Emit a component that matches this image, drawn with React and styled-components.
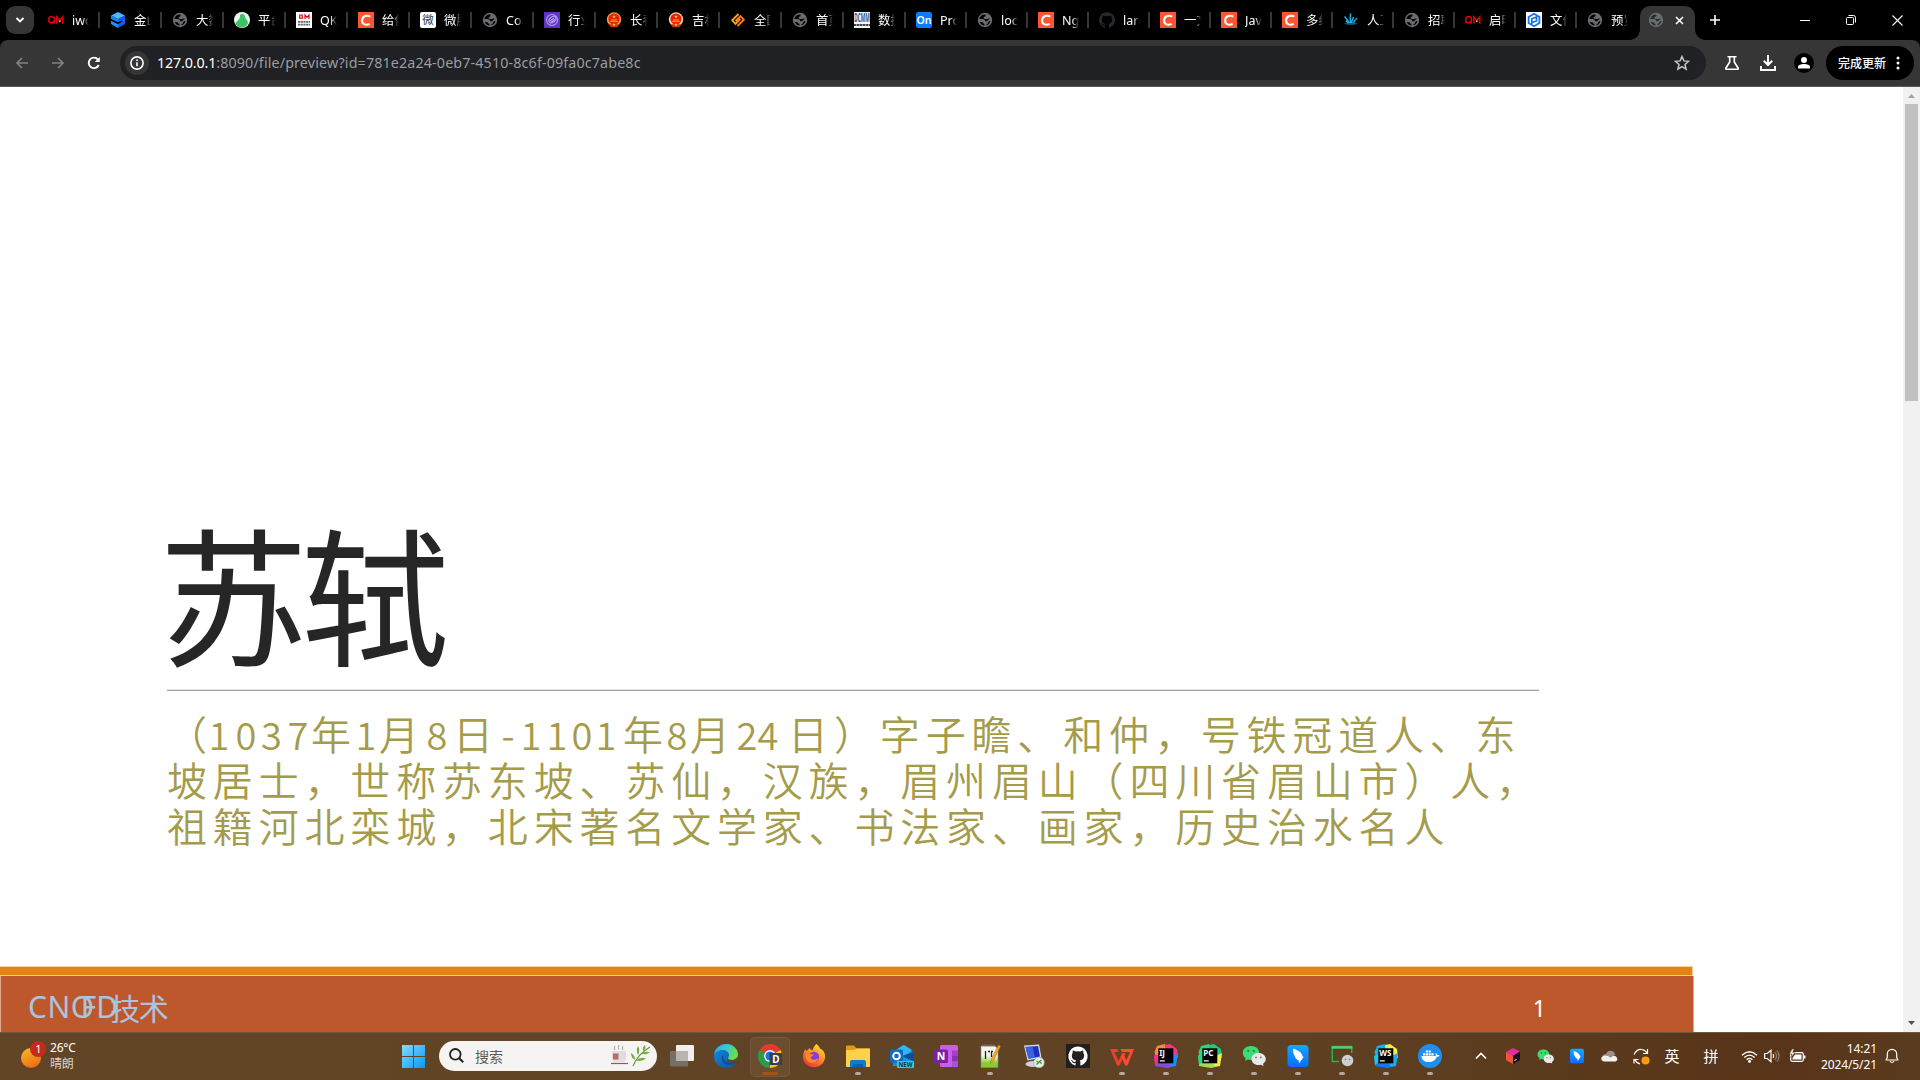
import React from "react";
import styled, { createGlobalStyle } from "styled-components";

const UI = `"Noto Sans", "Noto Sans CJK SC", sans-serif`;
const CJK = `"Noto Sans CJK SC", sans-serif`;

const GlobalStyle = createGlobalStyle`
  html, body { margin: 0; padding: 0; overflow: hidden; background: #000; }
  * { box-sizing: border-box; }
  svg { display: block; flex: none; }
`;

const Screen = styled.div`
  width: 1920px;
  height: 1080px;
  display: flex;
  flex-direction: column;
  overflow: hidden;
  font-family: ${UI};
`;

/* ---------- tab strip ---------- */
const TabStrip = styled.header`
  height: 40px;
  flex: none;
  display: flex;
  background: #000;
  padding-left: 6px;
`;
const TabSearch = styled.div`
  width: 28px;
  height: 28px;
  margin: 6px 4px 0 0;
  border-radius: 9px;
  background: #363636;
  display: grid;
  place-items: center;
`;
const Tab = styled.div`
  width: ${(p) => p.$w}px;
  flex: none;
  height: 40px;
  display: flex;
  align-items: center;
  padding-left: 10px;
`;
const TabTitle = styled.span`
  width: 17px;
  margin: 1px 0 0 8px;
  height: 20px;
  line-height: 20px;
  font-size: 12.5px;
  color: #fff;
  overflow: hidden;
  white-space: nowrap;
  mask-image: linear-gradient(90deg, #000 60%, transparent 100%);
`;
const TabDivider = styled.i`
  width: 2px;
  height: 16px;
  margin-left: auto;
  background: #363636;
`;
const ActiveTab = styled.div`
  width: 55px;
  height: 34px;
  margin: 6px 0 0 2px;
  flex: none;
  border-radius: 10px 10px 0 0;
  background: #363636;
  display: flex;
  align-items: center;
  gap: 11px;
  padding: 0 0 6px 8px;
  position: relative;
  &::before, &::after {
    content: "";
    position: absolute;
    bottom: 0;
    width: 10px;
    height: 10px;
  }
  &::before { left: -10px; background: radial-gradient(circle at 0 0, transparent 9.5px, #363636 10px); }
  &::after { right: -10px; background: radial-gradient(circle at 100% 0, transparent 9.5px, #363636 10px); }
`;
const NewTab = styled.div`
  width: 40px;
  height: 40px;
  display: grid;
  place-items: center;
`;
const WindowButtons = styled.div`
  margin-left: auto;
  display: flex;
`;
const WindowButton = styled.div`
  width: 46px;
  height: 40px;
  display: grid;
  place-items: center;
`;

/* ---------- toolbar ---------- */
const ToolbarBack = styled.div`
  height: 47px;
  flex: none;
  background: #000;
`;
const Toolbar = styled.div`
  height: 47px;
  display: flex;
  align-items: center;
  background: #363636;
  border-bottom: 1px solid #5a5a5a;
  border-radius: 8px 8px 0 0;
  padding-left: 4px;
`;
const ToolButton = styled.div`
  width: 36px;
  height: 34px;
  flex: none;
  display: grid;
  place-items: center;
`;
const Omnibox = styled.div`
  width: 1586px;
  height: 34px;
  margin: 0 8px;
  border-radius: 17px;
  background: #202124;
  display: flex;
  align-items: center;
  padding: 0 16px 0 5px;
`;
const InfoDot = styled.div`
  width: 24px;
  height: 24px;
  border-radius: 50%;
  background: #363636;
  display: grid;
  place-items: center;
`;
const Url = styled.div`
  margin-left: 8px;
  flex: 1;
  font-size: 14.3px;
  line-height: 20px;
  letter-spacing: 0.13px;
  color: #9a9da1;
  b { font-weight: 400; color: #fff; letter-spacing: -0.15px; }
`;
const UpdateButton = styled.div`
  width: 88px;
  height: 34px;
  margin-left: 4px;
  border-radius: 17px;
  background: #000;
  color: #fff;
  display: flex;
  align-items: center;
  gap: 10px;
  padding-left: 12px;
  font: 500 12px/18px ${CJK};
`;

/* ---------- page ---------- */
const Page = styled.main`
  height: 945px;
  flex: none;
  display: flex;
  background: #fff;
`;
const Slide = styled.section`
  width: 1903px;
  display: flex;
  flex-direction: column;
`;
const SlideBody = styled.div`
  width: 1539px;
  height: 879px;
  padding: 429px 0 0 167px;
`;
const Title = styled.h1`
  margin: 0 0 0 -8px;
  height: 148px;
  font: 400 149px/148px ${CJK};
  letter-spacing: -7px;
  color: #262626;
  white-space: nowrap;
`;
const Rule = styled.div`
  height: 2px;
  margin-top: 25px;
  background: linear-gradient(#e2e2e2 50%, #a6a6a6 50%);
`;
const Paragraph = styled.div`
  margin-top: 20px;
  color: #a49b4b;
  font: 350 40px/45.8px ${CJK};
  white-space: nowrap;
`;
const Line = styled.div`
  display: flex;
  height: 45.8px;
  letter-spacing: 5.83px;
`;
const Glyph = styled.span`
  width: ${(p) => p.$w}px;
  margin-left: ${(p) => p.$gap}px;
  flex: none;
  letter-spacing: 0;
  font-size: ${(p) => (p.$w < 40 ? 38 : 40)}px;
  display: flex;
  justify-content: center;
`;
const Run = styled.span`
  margin-left: ${(p) => p.$gap}px;
`;
const AccentBar = styled.div`
  width: 1693px;
  height: 10px;
  background: #e48312;
  border: solid #f6cf9f;
  border-width: 1px 1px 1px 0;
`;
const FooterBar = styled.footer`
  width: 1694px;
  height: 56px;
  background: #bd582c;
  border: solid #e0a78c;
  border-width: 0 1px 0 1px;
  display: flex;
  align-items: center;
  justify-content: space-between;
  padding: 7px 147px 0 27px;
`;
const FooterName = styled.div`
  display: flex;
  align-items: center;
  height: 40px;
  margin-top: -2px;
  line-height: 40px;
  color: #abc3de;
  font-size: 30px;
`;
const NamePart = styled.span`
  margin-left: ${(p) => p.$gap || 0}px;
  letter-spacing: ${(p) => p.$track}px;
  font-family: ${(p) => (p.$cjk ? CJK : UI)};
`;
const PageNumber = styled.div`
  font-size: 23px;
  line-height: 30px;
  color: #fff;
`;
const Scrollbar = styled.aside`
  width: 17px;
  background: #f1f1f1;
  display: flex;
  flex-direction: column;
  align-items: center;
  justify-content: space-between;
`;
const ScrollThumb = styled.div`
  width: 13px;
  height: 297px;
  margin-bottom: auto;
  background: #c1c1c1;
`;

/* ---------- taskbar ---------- */
const Taskbar = styled.nav`
  height: 48px;
  flex: none;
  display: flex;
  align-items: center;
  border-top: 1px solid #6b5a40;
  background: linear-gradient(90deg, #624526 0%, #604325 60%, #5b3b1e 80%, #583419 92%, #5b3b1f 100%);
  color: #fff;
`;
const Weather = styled.div`
  width: 402px;
  display: flex;
  align-items: center;
  gap: 3px;
  padding: 0 0 2px 20px;
`;
const TwoLines = styled.div`
  display: flex;
  flex-direction: column;
  font-size: 12px;
  line-height: 16px;
  width: ${(p) => p.$w || "auto"};
  text-align: ${(p) => (p.$w ? "right" : "left")};
  letter-spacing: ${(p) => p.$track || 0}px;
  white-space: nowrap;
`;
const Muted = styled.span`
  color: #ddd3c8;
`;
const SearchBox = styled.div`
  width: 218px;
  height: 30px;
  margin: 0 3px 1px 14px;
  border-radius: 15px;
  background: #f6f4f2;
  color: #5d5a58;
  display: flex;
  align-items: center;
  padding: 0 5px 1px 10px;
  font: 400 14px/20px ${CJK};
  span { margin: 0 auto 0 11px; }
`;
const AppSlot = styled.div`
  width: 44px;
  height: 47px;
  flex: none;
  display: flex;
  flex-direction: column;
  align-items: center;
  padding-top: 11px;
`;
const ActiveApp = styled(AppSlot)`
  width: 40px;
  height: 40px;
  margin: 0 2px;
  padding-top: 7px;
  border-radius: 5px;
  background: #6b4e30;
  box-shadow: inset 0 0 0 1px #745940;
`;
const Indicator = styled.i`
  width: ${(p) => (p.$wide ? 16 : 6)}px;
  height: 3px;
  margin-top: 4px;
  border-radius: 2px;
  background: ${(p) => (p.$wide ? "#a65318" : "#b5a799")};
`;
const TrayItem = styled.div`
  width: ${(p) => p.$w}px;
  height: 40px;
  margin-bottom: 1px;
  flex: none;
  display: grid;
  place-items: center;
  font: 400 15px/20px ${CJK};
`;
const Tray = styled.div`
  display: flex;
  align-items: center;
  margin-left: 13px;
`;

/* ---------- favicons ---------- */
const Fav = ({ children }) => <svg width="16" height="16" viewBox="0 0 16 16">{children}</svg>;
const Globe = ({ hole = "#000" }) => (
  <Fav>
    <circle cx="8" cy="8" r="7.2" fill="#6a6e73" />
    <path d="M8.500 2.500C5.500 2 2.800 4 2.300 7h3.200c1.700 0 2.600.9 2.600 2.300h1.500c.9 0 1.200-.5 1.200-1.300 1 0 1.700-.5 2-1.200-.8-.5-1.800-.3-2.600.2H8.100c-1.300 0-1.800-.9-1.300-1.700.3-.6 1-.7 1.700-.7z" fill={hole} />
    <path d="M2.600 9.800c.8 2.200 2.700 3.600 4.900 3.800v-1.800c-.9 0-1.500-.6-1.500-1.400zM13.500 8.800c-.3 2.300-2 4.200-4.200 4.700.2-.9.2-1.800 1.300-1.900.7-.2.300-1.600 1.200-2z" fill={hole} />
  </Fav>
);
const QM = () => (
  <Fav>
    <g fill="none" stroke="#e60012" strokeWidth="1.500">
      <rect x=".8" y="4.800" width="5.600" height="6" rx="2.200" />
      <path d="M4.500 9.500l2.300 2M8.800 11.700V4.900l3 3.800 3-3.800v6.800" />
    </g>
    <circle cx="11.800" cy="9.300" r=".9" fill="#fc0" />
  </Fav>
);
const CsdnC = () => (
  <Fav>
    <rect width="16" height="16" fill="#fc5531" />
    <path d="M12.300 4.600C9.500 2.900 4.400 3.600 4.100 8.200c-.2 4.400 4.200 5.400 7.600 3.600" fill="none" stroke="#fff" strokeWidth="2" />
  </Fav>
);
const Emblem = ({ ring }) => (
  <Fav>
    <circle cx="8" cy="7.500" r="7.200" fill={ring} />
    <circle cx="8" cy="7" r="5.600" fill="#e81f10" />
    <path d="M8 2.800l.5 1.200 1.200.1-.9.8.2 1.200-1-.6-1 .6.2-1.200-.9-.8 1.200-.1z" fill="#ffce2e" />
    <path d="M5 7.500h6v.9H5zM4 9.200h8v.9H4z" fill="#f9a825" />
    <path d="M3 12.300h10l-1.500 3h-7z" fill="#e02a10" />
    <circle cx="8" cy="12.800" r="1.200" fill="#f6b81c" />
  </Fav>
);
const GithubPath = "M8 .2a8 8 0 0 0-2.500 15.600c.4.1.5-.2.5-.4v-1.500c-2.200.5-2.700-.9-2.700-.9-.4-.9-.9-1.200-.9-1.200-.7-.5.1-.5.1-.5.8.1 1.200.8 1.200.8.7 1.200 1.900.9 2.300.7.1-.5.3-.9.5-1.100-1.800-.2-3.600-.9-3.600-4 0-.9.3-1.600.8-2.100-.1-.2-.4-1 .1-2.100 0 0 .7-.2 2.200.8a7.500 7.500 0 0 1 4 0c1.500-1 2.200-.8 2.200-.8.5 1.100.2 1.900.1 2.100.5.5.8 1.200.8 2.100 0 3.100-1.900 3.800-3.700 4 .3.3.6.8.6 1.500v2.200c0 .2.1.5.5.4A8 8 0 0 0 8 .2z";
const favicons = {
  qm: <QM />,
  globe: <Globe />,
  c: <CsdnC />,
  cube: (
    <Fav>
      <path d="M8 0l7 3.500-4 2L8 7.200 5 5.500 1 3.500z" fill="#4db8ff" />
      <path d="M1 3.500l7 3.700v3L1 7z" fill="#1c86ff" />
      <path d="M15 3.500V12l-7 4v-4l4-2.200V8.500L8 10.200v-3z" fill="#0d5ff0" />
      <path d="M1 8.700l7 3.500V16l-7-4z" fill="#2a8cff" />
    </Fav>
  ),
  green: (
    <Fav>
      <circle cx="8" cy="8" r="8" fill="#e9f8ee" />
      <path d="M6 3c1.500-2 5-1 5 1.500 0 2 3 3.500 3 6.500-1 3-4 4.500-6.500 4.500S1.800 13.500 1.500 11C3 9 6.500 7.500 6 3z" fill="#3cc564" />
    </Fav>
  ),
  qk: (
    <Fav>
      <rect width="16" height="16" fill="#fff" />
      <path d="M3.700 3h2.600v3.200H3.700zM9 7V3l2 2.300L13 3v4" fill="none" stroke="#e60012" strokeWidth="1.200" />
      <path d="M2 9.800h12M2 12.600h12" stroke="#666" strokeWidth="1.700" strokeDasharray="2.200 .5" />
    </Fav>
  ),
  wei: (
    <Fav>
      <rect width="16" height="16" rx="2" fill="#fff" />
      <text x="8" y="12.200" fontSize="11.500" textAnchor="middle" fill="#2d3a4c" fontFamily="Noto Sans CJK SC">微</text>
    </Fav>
  ),
  purple: (
    <Fav>
      <rect width="16" height="16" fill="#5d34c4" />
      <g fill="none" stroke="#b9a3f3" strokeWidth="1.100">
        <circle cx="8" cy="8" r="5.500" />
        <ellipse cx="8.500" cy="7.500" rx="4" ry="2.600" transform="rotate(-40 8.500 7.500)" />
        <path d="M6 9l4-3M7 10.500l4-3" />
      </g>
    </Fav>
  ),
  emblem1: <Emblem ring="#e9a32a" />,
  emblem2: <Emblem ring="#f2d9a0" />,
  orange: (
    <Fav>
      <g fill="none" strokeWidth="1.900">
        <path d="M8.500 2L2.200 8.300l3.300 3.500 3-3V6.500L5.500 9" stroke="#ffa318" />
        <path d="M7.500 14l6.300-6.300-3.300-3.500-3 3v2.300l3-2.500" stroke="#ff7a1a" />
      </g>
    </Fav>
  ),
  dcmm: (
    <Fav>
      <rect width="16" height="16" fill="#f4f6fa" />
      <text x="8" y="9.500" fontSize="12" fontWeight="700" textAnchor="middle" textLength="15.500" lengthAdjust="spacingAndGlyphs" fill="#2e5a96" fontFamily="Noto Sans">DCMM</text>
      <path d="M0 13h16" stroke="#444" strokeWidth="2" strokeDasharray="2.500 .5" />
    </Fav>
  ),
  on: (
    <Fav>
      <rect width="16" height="16" rx="2" fill="#0a7cff" />
      <text x="8" y="12" fontSize="10.500" fontWeight="600" textAnchor="middle" fill="#fff" fontFamily="Noto Sans">On</text>
    </Fav>
  ),
  github: (
    <Fav>
      <path d={GithubPath} fill="#24292f" />
    </Fav>
  ),
  plant: (
    <Fav>
      <path d="M7 12C5 9 3 6 1.500 4.500M8 12C7 8 7 5 7.500 1.500M8.500 12c.2-3 1-5 2-7M10 12c.8-2.500 2-4.500 4-6M5 11L3 8.500" fill="none" stroke="#16b2ea" strokeWidth="1.500" />
      <path d="M1 11.500c3-.6 11-.6 14 0-3 1.800-11 1.800-14 0z" fill="#136184" />
    </Fav>
  ),
  hex: (
    <Fav>
      <rect width="16" height="16" fill="#fff" />
      <path d="M8 1.800l5.400 3.100v6.200L8 14.200l-5.400-3.100V4.900z" fill="none" stroke="#1670ea" strokeWidth="1.800" />
      <path d="M5.800 12V6.800L10.500 5v4L6 10.500" fill="none" stroke="#1670ea" strokeWidth="1.700" />
    </Fav>
  ),
};

const tabs = [
  ["qm", "iwo"], ["cube", "金山"], ["globe", "大数"], ["green", "平台"], ["qk", "QKM"], ["c", "给你"], ["wei", "微服"],
  ["globe", "Cor"], ["purple", "行业"], ["emblem1", "长春"], ["emblem2", "吉林"], ["orange", "全国"], ["globe", "首页"],
  ["dcmm", "数据"], ["on", "Pro"], ["globe", "loca"], ["c", "Ngi"], ["github", "lara"], ["c", "一文"], ["c", "Java"],
  ["c", "多线"], ["plant", "人工"], ["globe", "招聘"], ["qm", "启明"], ["hex", "文件"], ["globe", "预览"],
];

/* ---------- slide text ---------- */
const dated = [
  ["1", 219], ["0", 246], ["3", 271.5], ["7", 298], ["年", 331], ["1", 366], ["月", 399], ["8", 437], ["日", 473],
  ["-", 508], ["1", 531], ["1", 557], ["0", 582], ["1", 606], ["年", 643], ["8", 677], ["月", 710], ["2", 747],
  ["4", 768], ["日", 808],
];
const glyphWidth = (ch) => (/[0-9-]/.test(ch) ? 20 : 40);

/* ---------- taskbar icons (24px box) ---------- */
const Ic = ({ children, s = 24, vb = 24 }) => <svg width={s} height={s} viewBox={`0 0 ${vb} ${vb}`}>{children}</svg>;

const JetBrains = ({ label, tl, tr, br, bl, l }) => (
  <Ic>
    <path d="M3 2l8-2 2 9-11 5-1.500-6z" fill={tl} />
    <path d="M11 1l5-1 7 5 1 9-12-2z" fill={tr} />
    <path d="M24 9l-2 13-8 1.500-4-8z" fill={br} />
    <path d="M.5 11L10 12l7 11-4 1-12-2z" fill={bl} />
    <path d="M0 12l5-2v8l-4 3z" fill={l} />
    <rect x="4.300" y="4.300" width="15" height="15" fill="#000" />
    <text x="5.200" y="11.800" fontSize="8" fontWeight="700" fill="#fff" fontFamily="Noto Sans">{label}</text>
    <rect x="5.800" y="16.300" width="5" height="1.200" fill="#fff" />
  </Ic>
);
const WeChat = ({ s }) => (
  <Ic s={s}>
    <path d="M9 2C4 2 .8 5 .8 9c0 2.200 1.200 4 2.900 5.200L3 17l3-1.500c1 .3 2 .4 3 .4 5 0 8.300-3 8.300-6.900S14 2 9 2z" fill="#3ddc72" />
    <circle cx="6.200" cy="7" r="1.100" fill="#1c7a3c" />
    <circle cx="11.700" cy="7" r="1.100" fill="#1c7a3c" />
    <path d="M16.500 9c-4 0-7 2.600-7 6s3 6 7 6c.8 0 1.600-.1 2.300-.3L21.500 22l-.5-2.300c1.600-1.100 2.800-2.800 2.800-4.700 0-3.400-3.300-6-7.300-6z" fill="#e9e9ea" />
    <circle cx="14" cy="13.500" r=".9" fill="#777" />
    <circle cx="18.800" cy="13.500" r=".9" fill="#777" />
  </Ic>
);
const Bird = ({ s }) => (
  <Ic s={s}>
    <defs><linearGradient id="bd" x1="0" y1="0" x2="0" y2="1"><stop offset="0" stopColor="#14a8ff" /><stop offset="1" stopColor="#0a6cff" /></linearGradient></defs>
    <rect x="1.500" y="1" width="21" height="22" rx="3.500" fill="url(#bd)" />
    <path d="M7 4.500c5 1.500 9.500 4.500 9.500 8l1.200.3L13 19.500l-.3-3C10 15.500 9 13.500 9 12.500c-1.200-1.500-2-4.500-2-8z" fill="#fff" />
  </Ic>
);
const Edge = () => (
  <Ic>
    <defs>
      <linearGradient id="eg" x1="0" y1="0" x2="1" y2=".4"><stop offset="0" stopColor="#2a9fe8" /><stop offset=".5" stopColor="#35c8d8" /><stop offset="1" stopColor="#6be04a" /></linearGradient>
      <linearGradient id="eb" x1="0" y1="0" x2="1" y2="1"><stop offset="0" stopColor="#1a8be0" /><stop offset="1" stopColor="#0b4f9c" /></linearGradient>
    </defs>
    <circle cx="12" cy="12" r="12" fill="url(#eb)" />
    <path d="M.2 10.500C1 4.500 6 0 12 0c7 0 12 5 12 10.500 0 3.500-3 5.500-6.500 5.500-3 0-4-1.300-3.300-2.300.7-1 .8-1.700.8-2.700C15 8.500 12.500 6 9 6 4.500 6 1.200 8.200.2 10.500z" fill="url(#eg)" />
    <path d="M14.200 13.700c-.7 1 .3 2.300 3.300 2.300 2 0 4-.6 5.200-2l1 1.500-1 3c-5 2-11.500-.500-8.500-4.800z" fill="#624526" />
    <path d="M9.500 11.500c-1 3 .8 6 4 7 4 1 7.500-.5 9-1.500l-1 1.800C15 23 6.500 20 8 12z" fill="#0d4f95" />
  </Ic>
);
const Chrome = () => (
  <Ic>
    <path d="M12 12L1.600 6A12 12 0 0 1 22.400 6z" fill="#e33b2e" />
    <path d="M12 12L22.400 6A12 12 0 0 1 12 24z" fill="#fcc31e" />
    <path d="M12 12v12A12 12 0 0 1 1.600 6z" fill="#2a9d4a" />
    <circle cx="12" cy="12" r="5.900" fill="#fff" />
    <circle cx="12" cy="12" r="4.600" fill="#1f6fe5" />
    <rect x="11.500" y="9" width="12.500" height="12" fill="#3a3f44" />
    <text x="17.800" y="18.500" fontSize="10" fontWeight="700" textAnchor="middle" fill="#fff" fontFamily="Noto Sans">D</text>
  </Ic>
);
const Firefox = () => (
  <Ic>
    <defs><linearGradient id="ff" x1=".8" y1="0" x2=".2" y2="1"><stop offset="0" stopColor="#ffe53c" /><stop offset=".45" stopColor="#ff9020" /><stop offset="1" stopColor="#f8264e" /></linearGradient></defs>
    <path d="M14.500 0c2 1.500 3 3 3.500 4.500 3.500 1.500 5.500 5 5 9-.5 5.500-5 9.700-11 9.700S1 18.500 1 13c0-3.500 1-6 2.500-8 .2 1 .4 1.600 1 2.100C5.500 6 7 5.300 7.500 4c.8 1 1.500 2.200 3 2.500C11 4 12.500 1.500 14.500 0z" fill="url(#ff)" />
    <circle cx="12" cy="13" r="5.200" fill="#8b3ad8" />
    <path d="M4 10c3-1 5 .5 8 .5-1 2-3 1.500-3.500 3 1 3 5 3 8 .5-1 5-8 6.500-11.500 2.500C3.500 14.500 3.500 12 4 10z" fill="#ff8a1f" />
  </Ic>
);
const Folder = () => (
  <Ic>
    <path d="M0 3c0-1 .5-1.500 1.500-1.500H8l2.500 3H23c.6 0 1 .4 1 1V9H0z" fill="#e29a0f" />
    <path d="M0 6h8.500L10.500 4.500H24V22c0 .6-.4 1-1 1H1c-.6 0-1-.4-1-1z" fill="#ffd04a" />
    <path d="M4 23v-5c0-1.200.8-2 2-2h12c1.200 0 2 .8 2 2v5h-3v-2.500H7V23z" fill="#0f7bd0" />
    <path d="M7 20h10v3H7z" fill="#0a5fa8" />
  </Ic>
);
const Outlook = () => (
  <Ic>
    <path d="M3 8L13 1l10 7v14H3z" fill="#1a8fe0" />
    <path d="M6 6l8-5 8 5-8 7z" fill="#36b5f0" />
    <path d="M23 8v9L12 12z" fill="#0a4f9e" />
    <rect x="0" y="5.500" width="13" height="13" rx="1.500" fill="#0f6cc4" />
    <circle cx="6.500" cy="12" r="3.300" fill="none" stroke="#fff" strokeWidth="2" />
    <rect x="7" y="17" width="17" height="7" rx="1" fill="#27d3e8" />
    <text x="15.500" y="22.900" fontSize="6.800" fontWeight="700" textAnchor="middle" textLength="14" lengthAdjust="spacingAndGlyphs" fill="#06333a" fontFamily="Noto Sans">NEW</text>
  </Ic>
);
const OneNote = () => (
  <Ic>
    <rect x="6" y="1" width="18" height="22" rx="1.500" fill="#c95fe8" />
    <path d="M18 6.500h6V12h-6z" fill="#a63fd0" />
    <path d="M18 12h6v5.500h-6z" fill="#8c32b8" />
    <path d="M18 17.500h6V23h-6z" fill="#b04fdc" />
    <rect x="0" y="5.500" width="14" height="13.500" rx="1.500" fill="#7a1fa8" />
    <text x="7" y="16" fontSize="10.500" fontWeight="700" textAnchor="middle" fill="#fff" fontFamily="Noto Sans">N</text>
  </Ic>
);
const Notepad = () => (
  <Ic>
    <defs><linearGradient id="np" x1="0" y1="0" x2="0" y2="1"><stop offset=".45" stopColor="#f4f6ee" /><stop offset=".8" stopColor="#86cc2c" /></linearGradient></defs>
    <path d="M3 2h14l3 3v18.500H3z" fill="url(#np)" stroke="#888" strokeWidth=".6" />
    <path d="M4 1.500h13" stroke="#777" strokeWidth="1.800" strokeDasharray="1.200 1" />
    <path d="M7.500 7v8M10 7.500h2M13 7.500h2M13.500 8v5" stroke="#222" strokeWidth="1.300" />
    <path d="M20.500 1l2 1.200-7.500 15-2.500 2 .3-3.200z" fill="#f3a81c" stroke="#a8681a" strokeWidth=".5" />
  </Ic>
);
const Remote = () => (
  <Ic>
    <path d="M2 1.500l15-1 2.500 13-14 3z" fill="#d5d9e2" />
    <path d="M3.500 3l12.500-1L18 12.500l-11.500 2.200z" fill="#1c2fbd" />
    <path d="M3.500 3l7-.6L13 13.500l-6.500 1.200z" fill="#3b63e0" />
    <ellipse cx="11" cy="20" rx="7.500" ry="3" fill="#cfd2d8" />
    <circle cx="17" cy="18.500" r="5.300" fill="#e4eee4" stroke="#9bac9b" strokeWidth=".6" />
    <path d="M14.500 17l2 1.500-2 2M19.500 16l-2 1.500 2 2" stroke="#2b9438" strokeWidth="1.300" fill="none" />
  </Ic>
);
const Github = () => (
  <Ic>
    <rect x="0" y="0" width="24" height="24" fill="#231f20" />
    <g transform="translate(2.300 2.300) scale(1.210)"><path d={GithubPath} fill="#fff" /></g>
  </Ic>
);
const Wps = () => (
  <Ic>
    <path d="M0 5h7.500l1.200 3H4.500l4 9 3.500-8h3.800L9.500 21.500H7z" fill="#f23c2e" />
    <path d="M10.500 5H24l-6.500 16.500h-2.500L11.500 13l1.800-4 3 7.500L20 8h-8z" fill="#fb4a2c" />
  </Ic>
);
const Remote2 = () => (
  <Ic>
    <path d="M9 17.500H2.300V2.500h19.400V9" fill="none" stroke="#2bb24c" strokeWidth="1.400" />
    <path d="M1.600 3.500h20.800" stroke="#57cf73" strokeWidth="2.400" />
    <circle cx="17.500" cy="16.500" r="5.800" fill="#cfcfcf" />
    <circle cx="15.500" cy="15.500" r=".8" fill="#777" />
    <circle cx="19.500" cy="15.500" r=".8" fill="#777" />
  </Ic>
);
const Docker = () => (
  <Ic>
    <circle cx="12" cy="12" r="12" fill="#1d8ff0" />
    <path d="M3.500 12h14c.5-1 .3-2.200-.3-3 1.200.2 1.800 1 2 2 .9-.1 1.600 0 2.300.4-.5 1.100-1.500 1.400-2.700 1.400-1.500 3.700-4 5.200-7.800 5.200-4.500 0-7.200-2-7.500-6z" fill="#fff" />
    <path d="M5 9.200h2.200v2.200H5zM7.800 9.200H10v2.200H7.800zM10.600 9.200h2.200v2.200h-2.200zM13.400 9.200h2.200v2.200h-2.200zM7.800 6.600H10v2H7.800zM10.600 6.600h2.200v2h-2.200z" fill="#fff" />
  </Ic>
);
const TaskView = () => (
  <Ic>
    <rect x="6" y="1" width="18" height="16" rx="1" fill="#f1efed" />
    <rect x="0" y="7" width="18" height="15.500" rx="1" fill="#7c7672" opacity=".85" />
    <rect x="6" y="7" width="12" height="10" fill="#b9b4b0" />
  </Ic>
);
const apps = [
  [Folder, true], [Outlook], [OneNote], [Notepad, true], [Remote], [Github], [Wps, true],
  [() => <JetBrains label="IJ" tl="#fb8a3c" tr="#f5377f" br="#1a8cff" bl="#8a4bd8" l="#f52d8a" />, true],
  [() => <JetBrains label="PC" tl="#2fd47c" tr="#21c97a" br="#f0ee4c" bl="#9fe04c" l="#21d789" />, true],
  [WeChat, true], [Bird, true], [Remote2, true],
  [() => <JetBrains label="WS" tl="#12b0ee" tr="#eef04c" br="#1aa8f0" bl="#087cfa" l="#18c8e8" />, true],
  [Docker, true],
];

const stroke = { fill: "none", stroke: "#fff", strokeWidth: 1.6 };

export default function App() {
  return (
    <Screen>
      <GlobalStyle />
      <TabStrip>
        <TabSearch>
          <svg width="10" height="10" viewBox="0 0 10 10"><path d="M1.500 3l3.500 3.500L8.500 3" {...stroke} strokeWidth="1.900" /></svg>
        </TabSearch>
        {tabs.map(([icon, title], i) => (
          <Tab key={i} $w={i < 14 ? 62 : 61}>
            {favicons[icon]}
            <TabTitle>{title}</TabTitle>
            {i < tabs.length - 1 && <TabDivider />}
          </Tab>
        ))}
        <ActiveTab>
          <Globe hole="#2c2c2c" />
          <svg width="9" height="9" viewBox="0 0 9 9"><path d="M1 1l7 7M8 1L1 8" {...stroke} /></svg>
        </ActiveTab>
        <NewTab>
          <svg width="12" height="12" viewBox="0 0 12 12"><path d="M6 1v10M1 6h10" {...stroke} /></svg>
        </NewTab>
        <WindowButtons>
          <WindowButton><svg width="10" height="10"><path d="M0 5.500h10" stroke="#fff" /></svg></WindowButton>
          <WindowButton>
            <svg width="10" height="10" viewBox="0 0 10 10"><rect x=".5" y="2.500" width="7" height="7" rx="1" fill="none" stroke="#fff" /><path d="M2.500.5H7.500Q9.500.5 9.500 2.500V7.500" fill="none" stroke="#fff" /></svg>
          </WindowButton>
          <WindowButton><svg width="11" height="11" viewBox="0 0 11 11"><path d="M.5.5l10 10M10.500.5l-10 10" stroke="#fff" strokeWidth="1.100" /></svg></WindowButton>
        </WindowButtons>
      </TabStrip>

      <ToolbarBack>
        <Toolbar>
          <ToolButton><svg width="12" height="12" viewBox="0 0 12 12"><path d="M12 6H1.200M6 1L1 6l5 5" {...stroke} stroke="#828282" /></svg></ToolButton>
          <ToolButton><svg width="12" height="12" viewBox="0 0 12 12"><path d="M0 6h10.800M6 1l5 5-5 5" {...stroke} stroke="#828282" /></svg></ToolButton>
          <ToolButton>
            <svg width="14" height="14" viewBox="0 0 14 14"><path d="M11.700 9A5.200 5.200 0 1 1 11 3.600" {...stroke} strokeWidth="1.900" /><path d="M12.800 1v5H7.800z" fill="#fff" /></svg>
          </ToolButton>
          <Omnibox>
            <InfoDot>
              <svg width="14" height="14" viewBox="0 0 14 14"><circle cx="7" cy="7" r="6.100" {...stroke} /><path d="M7 6.200v4M7 3.500v1.500" {...stroke} /></svg>
            </InfoDot>
            <Url><b>127.0.0.1</b>:8090/file/preview?id=781e2a24-0eb7-4510-8c6f-09fa0c7abe8c</Url>
            <svg width="16" height="16" viewBox="0 0 16 16"><path d="M8 1.500l1.900 4.400 4.700.4-3.600 3.100 1.100 4.700L8 11.600l-4.100 2.500L5 9.400 1.400 6.300l4.700-.4z" fill="none" stroke="#c7c7c7" strokeWidth="1.500" /></svg>
          </Omnibox>
          <ToolButton>
            <svg width="16" height="16" viewBox="0 0 16 16"><path d="M3.500 1.700h9M5.700 2v5L1.800 13.200q-.3 1 .7 1h11q1 0 .7-1L10.300 7V2" {...stroke} /></svg>
          </ToolButton>
          <ToolButton>
            <svg width="16" height="16" viewBox="0 0 16 16"><path d="M8 0v9.500M3.800 5.800L8 10l4.200-4.200M1 11v4h14v-4" {...stroke} strokeWidth="2" /></svg>
          </ToolButton>
          <ToolButton>
            <svg width="20" height="20" viewBox="0 0 20 20"><circle cx="10" cy="10" r="10" fill="#000" /><circle cx="10" cy="7" r="3" fill="#fff" /><path d="M4 15.500v-1.500c0-4 12-4 12 0v1.500z" fill="#fff" /></svg>
          </ToolButton>
          <UpdateButton>
            完成更新
            <svg width="4" height="14" viewBox="0 0 4 14"><circle cx="2" cy="2" r="1.500" fill="#fff" /><circle cx="2" cy="7" r="1.500" fill="#fff" /><circle cx="2" cy="12" r="1.500" fill="#fff" /></svg>
          </UpdateButton>
        </Toolbar>
      </ToolbarBack>

      <Page>
        <Slide>
          <SlideBody>
            <Title>苏轼</Title>
            <Rule />
            <Paragraph>
              <Line>
                <Glyph $w={40} $gap={0}>（</Glyph>
                {dated.map(([ch, c], i) => {
                  const w = glyphWidth(ch);
                  const [pch, pc] = i ? dated[i - 1] : ["（", 187];
                  return <Glyph key={i} $w={w} $gap={c - pc - (w + glyphWidth(pch)) / 2}>{ch}</Glyph>;
                })}
                <Run $gap={6}>）字子瞻、和仲，号铁冠道人、东</Run>
              </Line>
              <Line>坡居士，世称苏东坡、苏仙，汉族，眉州眉山（四川省眉山市）人，</Line>
              <Line>祖籍河北栾城，北宋著名文学家、书法家、画家，历史治水名人</Line>
            </Paragraph>
          </SlideBody>
          <AccentBar />
          <FooterBar>
            <FooterName>
              <NamePart $track={0.5}>CNO</NamePart>
              <NamePart $track={0} $gap={-14}>FD</NamePart>
              <NamePart $track={-1.400} $gap={-8} $cjk>技术</NamePart>
            </FooterName>
            <PageNumber>1</PageNumber>
          </FooterBar>
        </Slide>
        <Scrollbar>
          <svg width="17" height="17" viewBox="0 0 17 17"><path d="M5 11l3.500-4 3.500 4z" fill="#a3a3a3" /></svg>
          <ScrollThumb />
          <svg width="17" height="17" viewBox="0 0 17 17"><path d="M5 6l3.500 4L12 6z" fill="#505050" /></svg>
        </Scrollbar>
      </Page>

      <Taskbar>
        <Weather>
          <svg width="27" height="29" viewBox="0 0 27 29">
            <defs><linearGradient id="sun" x1=".2" y1="0" x2=".7" y2="1"><stop offset="0" stopColor="#f5b72c" /><stop offset="1" stopColor="#f0690f" /></linearGradient></defs>
            <circle cx="11" cy="17" r="10" fill="url(#sun)" />
            <circle cx="18" cy="8" r="8" fill="#c42b1c" />
            <text x="18.500" y="12" fontSize="11" textAnchor="middle" fill="#fff" fontFamily="Noto Sans">1</text>
          </svg>
          <TwoLines $track={-0.2}><span>26°C</span><Muted>晴朗</Muted></TwoLines>
        </Weather>
        <svg width="23" height="23" viewBox="0 0 23 23">
          <defs><linearGradient id="win" x1="0" y1="0" x2="1" y2="1"><stop offset="0" stopColor="#7fdcff" /><stop offset="1" stopColor="#0a98f5" /></linearGradient></defs>
          <path d="M0 0h11v11H0zM12 0h11v11H12zM0 12h11v11H0zM12 12h11v11H12z" fill="url(#win)" />
        </svg>
        <SearchBox>
          <svg width="15" height="15" viewBox="0 0 15 15"><circle cx="6.300" cy="6.300" r="5.300" fill="none" stroke="#222" strokeWidth="1.800" /><path d="M10.200 10.200l4 4" stroke="#222" strokeWidth="2" /></svg>
          <span>搜索</span>
          <svg width="42" height="22" viewBox="0 0 42 22">
            <path d="M5 1q-1.500 2 0 4M9 0q-1.500 2.500 0 4.500M13 1q-1.500 2 0 4" stroke="#a8a2a0" fill="none" />
            <path d="M2 6h14v7q0 4-4 4H6q-4 0-4-4z" fill="#e3dae8" />
            <rect x="3" y="8.500" width="5.500" height="6" fill="#b5714f" />
            <path d="M1 18.500h17" stroke="#8c5a62" strokeWidth="1.200" />
            <path d="M23 21Q28 9 40 2" stroke="#5d9130" strokeWidth="1.100" fill="none" />
            <path d="M25 15q-4-2-4-7 4 2 4 7zM28 10q-2.500-5 0-9 2.500 4 0 9zM26 15.500q4-4 10-2-4 3.500-10 2zM31 8.500q4-3 9-1-4 3-9 1zM33 6q-1-4 2-6 1.500 4-2 6z" fill="#79ae3c" />
          </svg>
        </SearchBox>
        <AppSlot><TaskView /></AppSlot>
        <AppSlot><Edge /></AppSlot>
        <ActiveApp><Chrome /><Indicator $wide /></ActiveApp>
        <AppSlot><Firefox /></AppSlot>
        {apps.map(([Icon, running], i) => (
          <AppSlot key={i}><Icon />{running && <Indicator />}</AppSlot>
        ))}
        <Tray>
          <TrayItem $w={32}><svg width="12" height="8" viewBox="0 0 12 8"><path d="M1 6.500l5-5 5 5" {...stroke} /></svg></TrayItem>
          <TrayItem $w={32}>
            <svg width="14" height="16" viewBox="0 0 14 16"><path d="M7 0l7 3.500L7 8 0 4z" fill="#e82aa0" /><path d="M0 4l7 4v8l-7-4z" fill="#f5533a" /><path d="M14 3.500V12l-7 4V8z" fill="#1c1020" /><path d="M8.500 12.500l2-1" stroke="#fff" /></svg>
          </TrayItem>
          <TrayItem $w={32}><WeChat s={17} /></TrayItem>
          <TrayItem $w={32}><Bird s={16} /></TrayItem>
          <TrayItem $w={32}>
            <svg width="17" height="12" viewBox="0 0 17 12"><path d="M1 6Q3 4 5 4q2-4 6-3 3 1 3 4l-7 3z" fill="#9d9188" /><path d="M3.500 11.500Q0 11 .3 8 1 5.500 4.500 5.500q3 .3 5 2 3-3 6-.5 2 3-.8 4.500z" fill="#f3f1ef" /></svg>
          </TrayItem>
          <TrayItem $w={32}>
            <svg width="17" height="17" viewBox="0 0 17 17"><path d="M1 6.500Q4 1 8.500 1.500q3.500.3 5.500 3.500M14.500 1v4.500H10M1 15.500v-4h4.500M2 12q2 3.500 5 3.800" {...stroke} strokeWidth="1.200" /><circle cx="12.500" cy="12.500" r="4" fill="#ff9a0a" /></svg>
          </TrayItem>
          <TrayItem $w={30}>英</TrayItem>
          <TrayItem $w={48}>拼</TrayItem>
          <TrayItem $w={28}>
            <svg width="17" height="13" viewBox="0 0 17 13"><path d="M1 5.200q7.500-7 15 0M3.300 7.500q5.200-4.800 10.400 0M5.600 9.700q2.900-2.600 5.800 0" {...stroke} strokeWidth="1.300" /><circle cx="8.500" cy="11.300" r="1.500" fill="#fff" /></svg>
          </TrayItem>
          <TrayItem $w={18}>
            <svg width="16" height="14" viewBox="0 0 16 14"><path d="M.7 4.500h2.600L7 1.200v11.600L3.300 9.500H.7z" {...stroke} strokeWidth="1.200" /><path d="M9 5q1.500 2 0 4" {...stroke} strokeWidth="1.200" /><path d="M11 3q3 4 0 8M13 1.500q4 5.500 0 11" fill="none" stroke="#94816f" strokeWidth="1.200" /></svg>
          </TrayItem>
          <TrayItem $w={32}>
            <svg width="17" height="14" viewBox="0 0 17 14"><rect x="1.700" y="3.700" width="12.600" height="8.600" rx="1.500" {...stroke} strokeWidth="1.200" /><path d="M6 5.500h6.500v5H3.500V9zM15 6.500h1.500v3H15z" fill="#fff" /><path d="M3 0L.5 5H3L2 8.500 6 3.500H3.500L5 0z" fill="#fff" stroke="#583419" strokeWidth=".5" /></svg>
          </TrayItem>
          <TwoLines $w="64px" $track={-0.1}><span>14:21</span><span>2024/5/21</span></TwoLines>
          <TrayItem $w={30}>
            <svg width="14" height="16" viewBox="0 0 14 16"><path d="M1 12h12l-1.300-2.500V6a4.700 4.700 0 0 0-9.400 0v3.500z" {...stroke} strokeWidth="1.200" strokeLinejoin="round" /><path d="M5 13q2 3 4 0" {...stroke} strokeWidth="1.200" /></svg>
          </TrayItem>
        </Tray>
      </Taskbar>
    </Screen>
  );
}
